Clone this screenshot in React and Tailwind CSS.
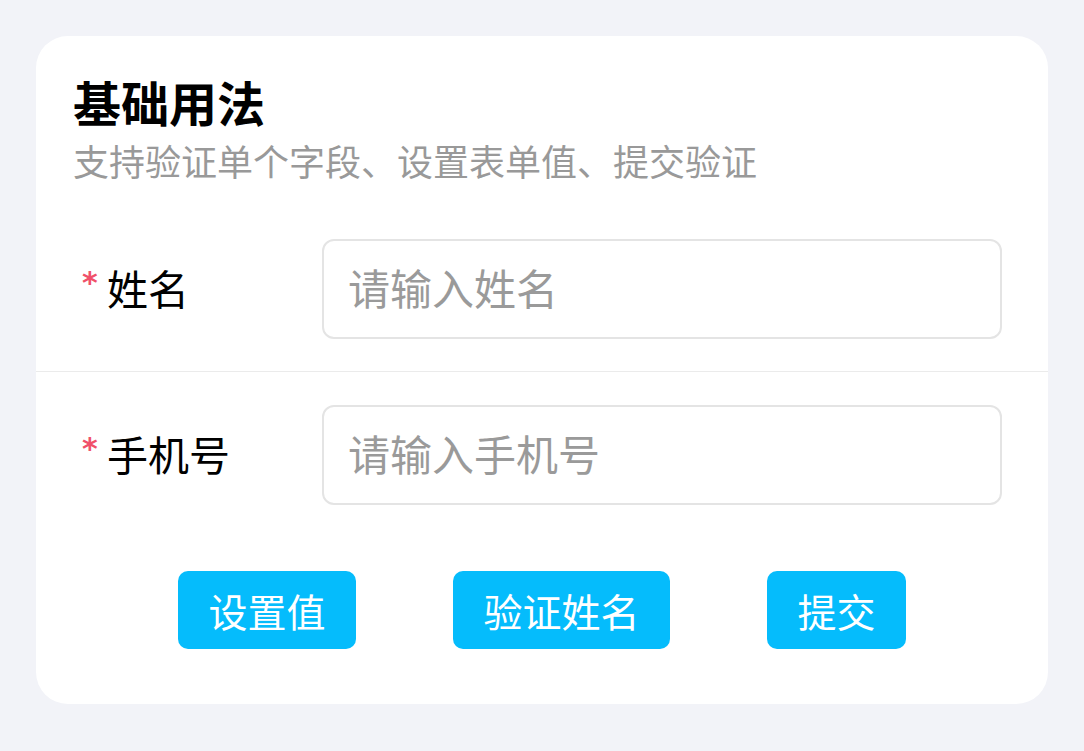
export default function App() {
  const font = { fontFamily: '"Noto Sans CJK SC", "Noto Sans", sans-serif' };
  const Row = ({ label, placeholder, border }) => (
    <div className={`flex items-center h-[165px] px-[46px] ${border ? 'border-b border-[#ebebeb]' : ''}`}>
      <div className="w-[240px] flex items-center">
        <span className="text-[#f0506a] text-[30px] font-bold leading-none w-[25px] mt-[-12px]" style={{ fontFamily: '"DejaVu Sans", sans-serif' }}>*</span>
        <span className="text-[41px] leading-none text-black mt-[-3px]">{label}</span>
      </div>
      <div className="flex-1 h-[100px] border-2 border-[#e4e4e4] rounded-[12px] flex items-center pl-[24px]">
        <span className="text-[42px] leading-none text-[#9a9a9a] mt-[-4px]">{placeholder}</span>
      </div>
    </div>
  );
  return (
    <div className="w-[1084px] h-[751px] bg-[#f2f3f8] pt-[36px] pl-[36px]" style={font}>
      <div className="w-[1012px] h-[668px] bg-white rounded-[32px] flex flex-col">
        <div className="pl-[37px] pt-[35px]">
          <div className="h-[60px] flex items-center text-[48px] font-bold text-black leading-none">基础用法</div>
          <div className="h-[48px] mt-[5px] flex items-center text-[36px] text-[#999999] leading-none">支持验证单个字段、设置表单值、提交验证</div>
        </div>
        <div className="mt-[23px]">
          <Row label="姓名" placeholder="请输入姓名" border />
          <Row label="手机号" placeholder="请输入手机号" />
        </div>
        <div className="flex justify-center gap-[97px] mt-[34px]">
          <button className="h-[78px] px-[30.5px] rounded-[10px] bg-[#05bcfc] text-white text-[39px] leading-none">设置值</button>
          <button className="h-[78px] px-[30.5px] rounded-[10px] bg-[#05bcfc] text-white text-[39px] leading-none">验证姓名</button>
          <button className="h-[78px] px-[30.5px] rounded-[10px] bg-[#05bcfc] text-white text-[39px] leading-none">提交</button>
        </div>
      </div>
    </div>
  );
}
